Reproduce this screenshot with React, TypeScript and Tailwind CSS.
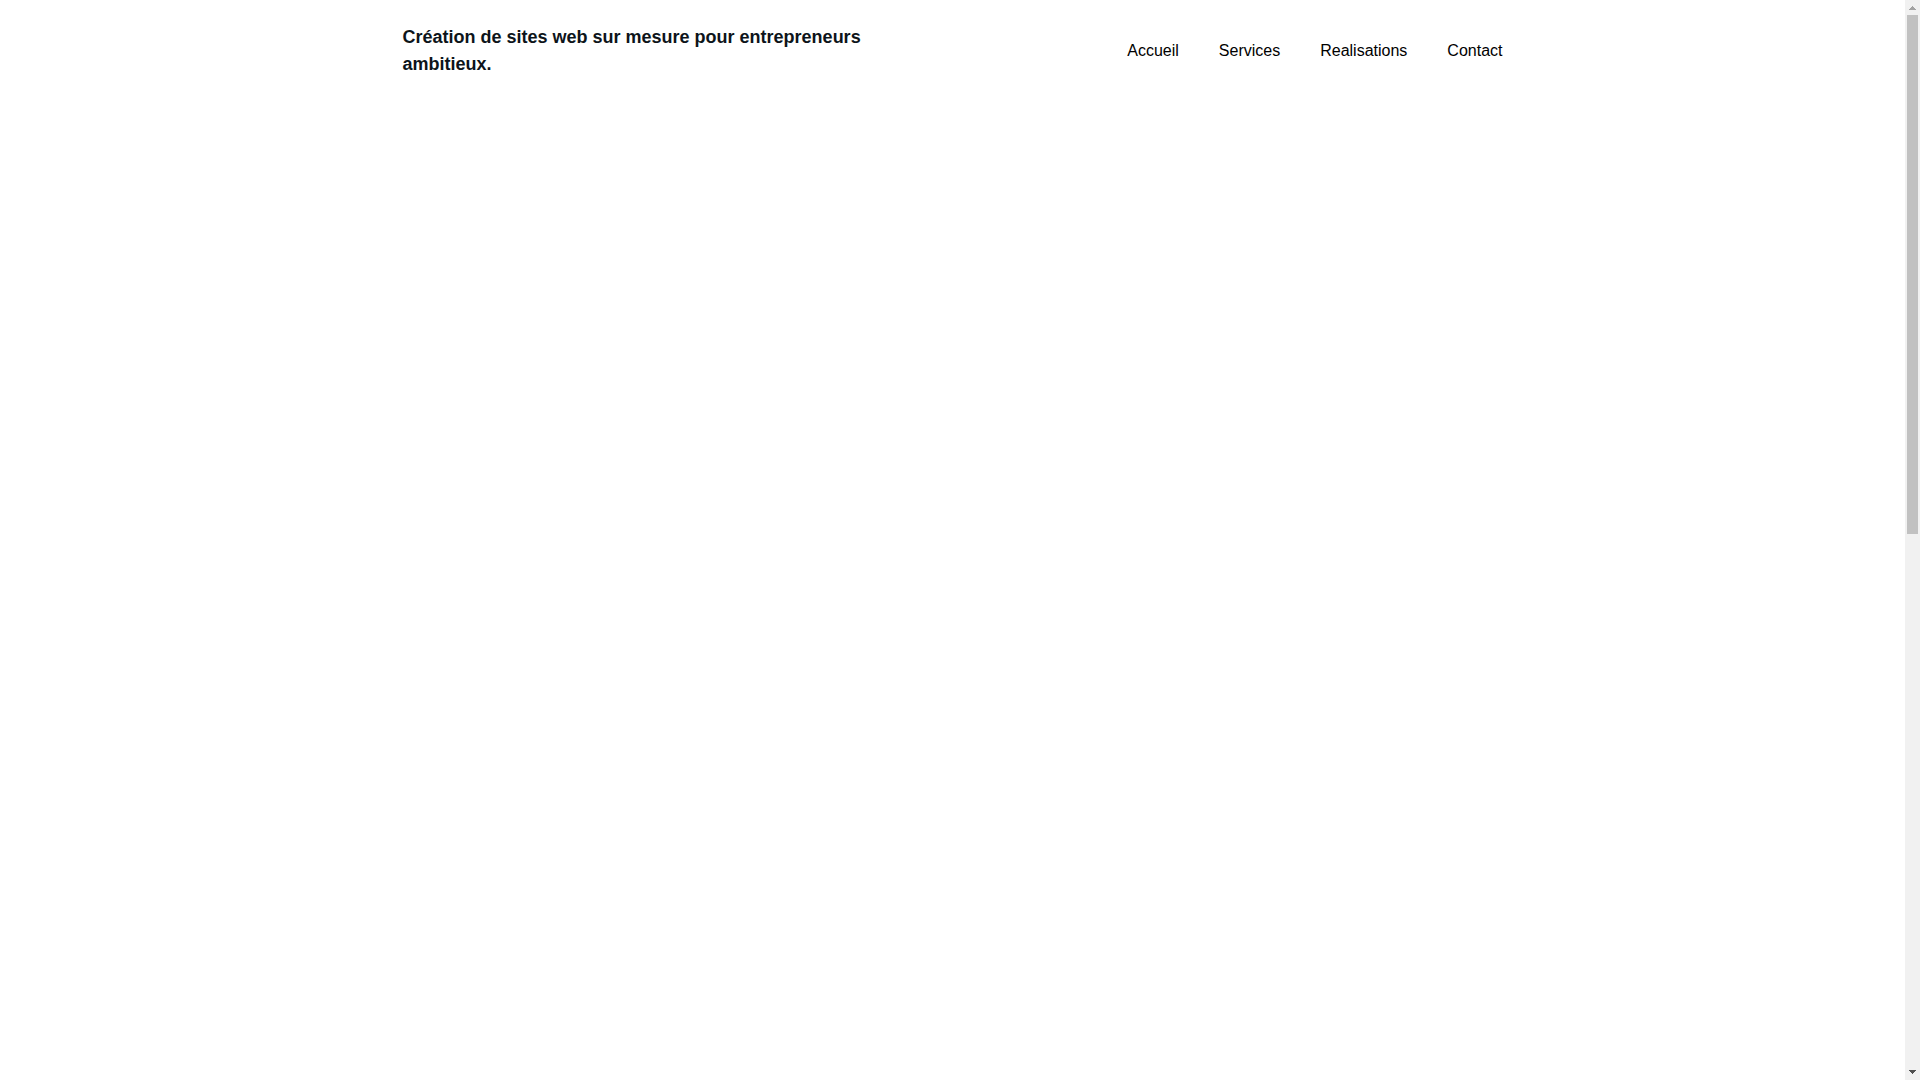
const links = [
  { label: "Accueil", href: "#accueil" },
  { label: "Services", href: "#services" },
  { label: "Realisations", href: "#realisations" },
  { label: "Contact", href: "#contact" },
];

function Header() {
  return (
    <header className="py-6">
      <div className="mx-auto flex max-w-[1100px] items-center justify-between">
        <a href="#accueil" className="w-full max-w-[480px] text-[18px] leading-[27px] font-bold text-[#0d141a]">
          Création de sites web sur mesure pour entrepreneurs ambitieux.
        </a>
        <nav className="flex gap-10 text-base text-black">
          {links.map((link) => (
            <a key={link.href} href={link.href}>
              {link.label}
            </a>
          ))}
        </nav>
      </div>
    </header>
  );
}

function ScrollTrack() {
  return (
    <div aria-hidden="true" className="flex w-[15px] shrink-0 flex-col items-center bg-[#f1f1f1]">
      <svg className="h-[15px] w-[15px] shrink-0" viewBox="0 0 15 15" shapeRendering="crispEdges">
        <path d="M7 6h1v1h1v1h1v1h1v1H4V9h1V8h1V7h1z" fill="#a3a3a3" />
      </svg>
      <div className="min-h-0 w-full flex-1 px-[2px]">
        <div className="h-[49.4%] bg-[#c1c1c1]" />
      </div>
      <svg className="h-[15px] w-[15px] shrink-0" viewBox="0 0 15 15" shapeRendering="crispEdges">
        <path d="M4 5h7v1h-1v1H9v1H8v1H7V8H6V7H5V6H4z" fill="#505050" />
      </svg>
    </div>
  );
}

export default function App() {
  return (
    <div className="flex h-screen bg-white font-['Liberation_Sans',Arial,sans-serif]">
      <main className="min-w-0 flex-1 overflow-hidden">
        <Header />
      </main>
      <ScrollTrack />
    </div>
  );
}
